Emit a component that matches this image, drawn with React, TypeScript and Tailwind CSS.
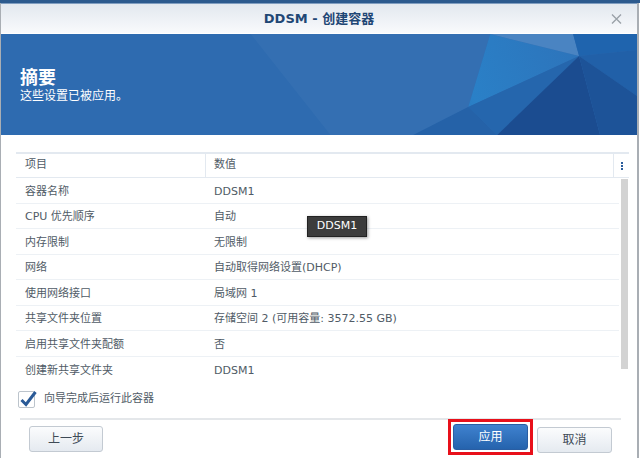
import React from 'react';

const rows: [string, string][] = [
  ['容器名称', 'DDSM1'],
  ['CPU 优先顺序', '自动'],
  ['内存限制', '无限制'],
  ['网络', '自动取得网络设置(DHCP)'],
  ['使用网络接口', '局域网 1'],
  ['共享文件夹位置', '存储空间 2 (可用容量: 3572.55 GB)'],
  ['启用共享文件夹配额', '否'],
  ['创建新共享文件夹', 'DDSM1'],
];

function BannerArt() {
  return (
    <svg className="absolute inset-0 w-full h-full" viewBox="0 0 637 101" preserveAspectRatio="none">
      <defs>
        <linearGradient id="ridge" x1="579" y1="22" x2="440" y2="80" gradientUnits="userSpaceOnUse">
          <stop offset="0" stopColor="#2d74bb" />
          <stop offset="0.75" stopColor="#2a80c7" />
          <stop offset="1" stopColor="#2b72b8" />
        </linearGradient>
      </defs>
      <polygon points="250,0 490,0 468,73 413,101 330,101" fill="#ffffff" opacity="0.03" />
      <polygon points="490,0 579,22 468,73" fill="url(#ridge)" />
      <polygon points="490,0 573,0 579,22" fill="#4a84c2" />
      <polygon points="573,0 637,0 637,16 579,22" fill="#1f64ae" />
      <polygon points="413,101 468,73 497,101" fill="#2562a8" />
      <polygon points="468,73 579,22 497,101" fill="#2566ad" />
      <polygon points="497,101 579,22 600,101" fill="#1b4c90" />
      <polygon points="579,22 637,16 637,62" fill="#2160a8" />
      <polygon points="579,22 637,62 637,101 600,101" fill="#1d5398" />
    </svg>
  );
}

export default function App() {
  return (
    <div
      className="w-[640px] h-[458px] bg-white flex flex-col overflow-hidden text-[11px] text-[#505b66]"
      style={{ fontFamily: '"DejaVu Sans", "Noto Sans CJK SC", sans-serif' }}
    >
      <div className="h-[3px] bg-[#2c5a8e] shrink-0" />
      <div className="flex-1 flex flex-col w-[639px] border-l border-r-2 border-[#a9aeb4] relative">
        {/* title bar */}
        <div className="h-[31px] shrink-0 bg-gradient-to-b from-[#e2e8ef] to-[#f9fafc] border-t border-[#7f9dc0] border-b border-b-white flex items-center justify-center relative">
          <span className="text-[13px] font-bold text-[#1f4775]">DDSM - 创建容器</span>
          <svg className="absolute right-[15px] top-[10px]" width="11" height="10" viewBox="0 0 11 10">
            <path d="M1 0.5 L10 9.5 M10 0.5 L1 9.5" stroke="#9aa1a8" strokeWidth="1.4" />
          </svg>
        </div>

        {/* banner */}
        <div className="h-[101px] shrink-0 bg-[#2e6bb0] relative overflow-hidden">
          <BannerArt />
          <div className="relative pl-[19px] pt-[33px] flex flex-col text-white">
            <span className="text-[18px] font-bold leading-[22px]">摘要</span>
            <span className="text-[12px] leading-[14px]">这些设置已被应用。</span>
          </div>
        </div>

        {/* body */}
        <div className="flex-1 flex flex-col pt-[17px] relative">
          <div className="ml-[15px] w-[613px] flex flex-col">
            <div className="h-[26px] flex border-t-2 border-b border-[#e3e9f0]">
              <div className="w-[190px] pl-[9px] flex items-center border-r border-[#e3e9f0]">项目</div>
              <div className="w-[408px] pl-[8px] flex items-center border-r border-[#e3e9f0]">数值</div>
              <div className="flex-1 flex items-center justify-center">
                <div className="flex flex-col gap-[1px]">
                  <span className="w-[2px] h-[2px] bg-[#2b5d9c]" />
                  <span className="w-[2px] h-[2px] bg-[#2b5d9c]" />
                  <span className="w-[2px] h-[2px] bg-[#2b5d9c]" />
                </div>
              </div>
            </div>
            <div className="flex h-[204px]">
              <div className="w-[603px] flex flex-col">
                {rows.map(([k, v], i) => (
                  <div
                    key={k}
                    className={`h-[25.5px] flex items-center pt-[3px] ${i < rows.length - 1 ? 'border-b border-[#edf1f5]' : ''}`}
                  >
                    <div className="w-[190px] pl-[9px]">{k}</div>
                    <div className="pl-[8px]">{v}</div>
                  </div>
                ))}
              </div>
              <div className="ml-[2px] w-[7px] h-[190px] mt-[1px] bg-[#d3d3d3]" />
            </div>
          </div>

          {/* tooltip */}
          <div className="absolute left-[306px] top-[81px] w-[60px] h-[21px] bg-[#3c3c3c] border border-[#222] shadow-[1px_1px_3px_rgba(0,0,0,0.4)] text-white text-[11px] flex items-center justify-center">
            DDSM1
          </div>

          {/* checkbox */}
          <div className="mt-[9px] ml-[17px] h-[17px] flex items-center">
            <div className="relative w-[17px] h-[17px] border border-[#bcc4cc] rounded-[2px] bg-white">
              <svg className="absolute -left-[1px] -top-[3px]" width="20" height="20" viewBox="0 0 20 20">
                <path d="M3.5 11 L8 15.5 L17.5 3" fill="none" stroke="#2a5a97" strokeWidth="3" strokeLinejoin="miter" />
              </svg>
            </div>
            <span className="ml-[9px]">向导完成后运行此容器</span>
          </div>

          {/* separator */}
          <div className="mt-[10px] ml-[19px] w-[601px] h-[2px] bg-[#e4e7ea]" />

          {/* buttons */}
          <div className="mt-[6px] flex items-start">
            <button className="ml-[28px] w-[74px] h-[26px] rounded-[3px] border border-[#c3cad2] bg-gradient-to-b from-[#fbfcfd] to-[#e5eaf0] text-[12px] text-[#3e4a56]">
              上一步
            </button>
            <div className="ml-auto mr-[25px] flex items-center gap-[4px]">
              <div className="border-[3px] border-[#e8101a] p-[2px] -mt-[7px]">
                <button className="w-[75px] h-[26px] rounded-[3px] border border-[#2a5ea3] bg-gradient-to-b from-[#3f82cf] to-[#2563ad] text-[12px] text-white">
                  应用
                </button>
              </div>
              <button className="w-[75px] h-[26px] -mt-[1px] rounded-[3px] border border-[#c3cad2] bg-gradient-to-b from-[#fbfcfd] to-[#e5eaf0] text-[12px] text-[#3e4a56]">
                取消
              </button>
            </div>
          </div>
        </div>
      </div>
    </div>
  );
}
